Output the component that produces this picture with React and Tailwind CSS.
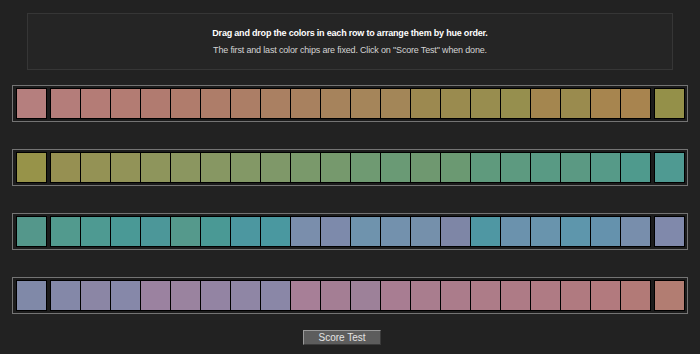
const ROWS = [
  [
    '#b57f7e', '#b47d7a', '#b47c76', '#b37c73', '#b17b70', '#b07c6c', '#ae7d69', '#ac7e66', '#aa8062', '#a8815f', '#a6835c',
    '#a5855a', '#a38658', '#9c8950', '#9a8b4f', '#988d4f', '#968f4e', '#a4864f', '#9a8b4e', '#a7854f', '#a8844f', '#949049',
  ],
  [
    '#979349', '#969052', '#949255', '#929358', '#8e955c', '#8b9660', '#879763', '#839866', '#7f9869', '#7a996b', '#76996d',
    '#6f9a72', '#6a9a75', '#6f9870', '#6b9972', '#5f9a7d', '#5d9a80', '#599a84', '#5b9983', '#569a88', '#4f9a8d', '#4f9a92',
  ],
  [
    '#54978b', '#529a8e', '#4e9a92', '#4a9996', '#4c9799', '#55998c', '#4a9995', '#4c97a0', '#4a98a0', '#7a8eac', '#7d8aab',
    '#6f93ad', '#7391ad', '#7590ab', '#7e86a6', '#4f97a3', '#6b92ad', '#6994ad', '#5e96ac', '#6592ad', '#788eac', '#8089ab',
  ],
  [
    '#8089a8', '#8488a8', '#8b86a5', '#8688a9', '#9b82a0', '#9a839f', '#9384a3', '#8f86a5', '#8a87a7', '#a77f97', '#a47e94',
    '#9d8199', '#a87d92', '#a97d8e', '#ab7c8b', '#ad7c88', '#ae7b86', '#af7b84', '#b07a80', '#b27a7e', '#b27a77', '#b27d72',
  ],
];

function Chip({ color }) {
  return <div className="h-full w-[29px]" style={{ backgroundColor: color }} />;
}

function HueRow({ colors }) {
  const first = colors[0];
  const last = colors[colors.length - 1];
  const middle = colors.slice(1, -1);

  return (
    <div className="flex h-[37px] items-stretch gap-[3px] border border-[#747474] bg-[#1c1c1c] p-[2px] pl-[3px]">
      <div className="flex border border-black">
        <Chip color={first} />
      </div>
      <div className="flex flex-1 gap-px border border-black bg-black">
        {middle.map((color, i) => (
          <Chip color={color} key={i} />
        ))}
      </div>
      <div className="flex border border-black">
        <Chip color={last} />
      </div>
    </div>
  );
}

export default function App() {
  return (
    <div
      className="flex h-[354px] w-[700px] flex-col bg-[#222222] pt-[13px]"
      style={{ fontFamily: '"Liberation Sans", Arial, sans-serif' }}
    >
      <div className="mx-[27px] flex h-[57px] flex-col items-center justify-center gap-[8px] border border-[#363636] bg-[#252525]">
        <p className="text-[9px] font-bold leading-none tracking-[-0.2px] text-white">
          Drag and drop the colors in each row to arrange them by hue order.
        </p>
        <p className="text-[9px] leading-none tracking-[-0.17px] text-[#d4d4d4]">
          The first and last color chips are fixed. Click on "Score Test" when done.
        </p>
      </div>

      <div className="mx-[12px] mt-[15px] flex flex-col gap-[27px]">
        {ROWS.map((colors, i) => (
          <HueRow colors={colors} key={i} />
        ))}
      </div>

      <div className="mt-[16px] flex justify-center pr-[16px]">
        <button
          className="flex h-[15px] w-[78px] items-center justify-center border border-b-[#3a3a3a] border-l-[#9a9a9a] border-r-[#3a3a3a] border-t-[#9a9a9a] bg-[#5d5d5d] text-[10px] leading-none text-[#e4e4e4]"
          type="button"
        >
          Score Test
        </button>
      </div>
    </div>
  );
}
